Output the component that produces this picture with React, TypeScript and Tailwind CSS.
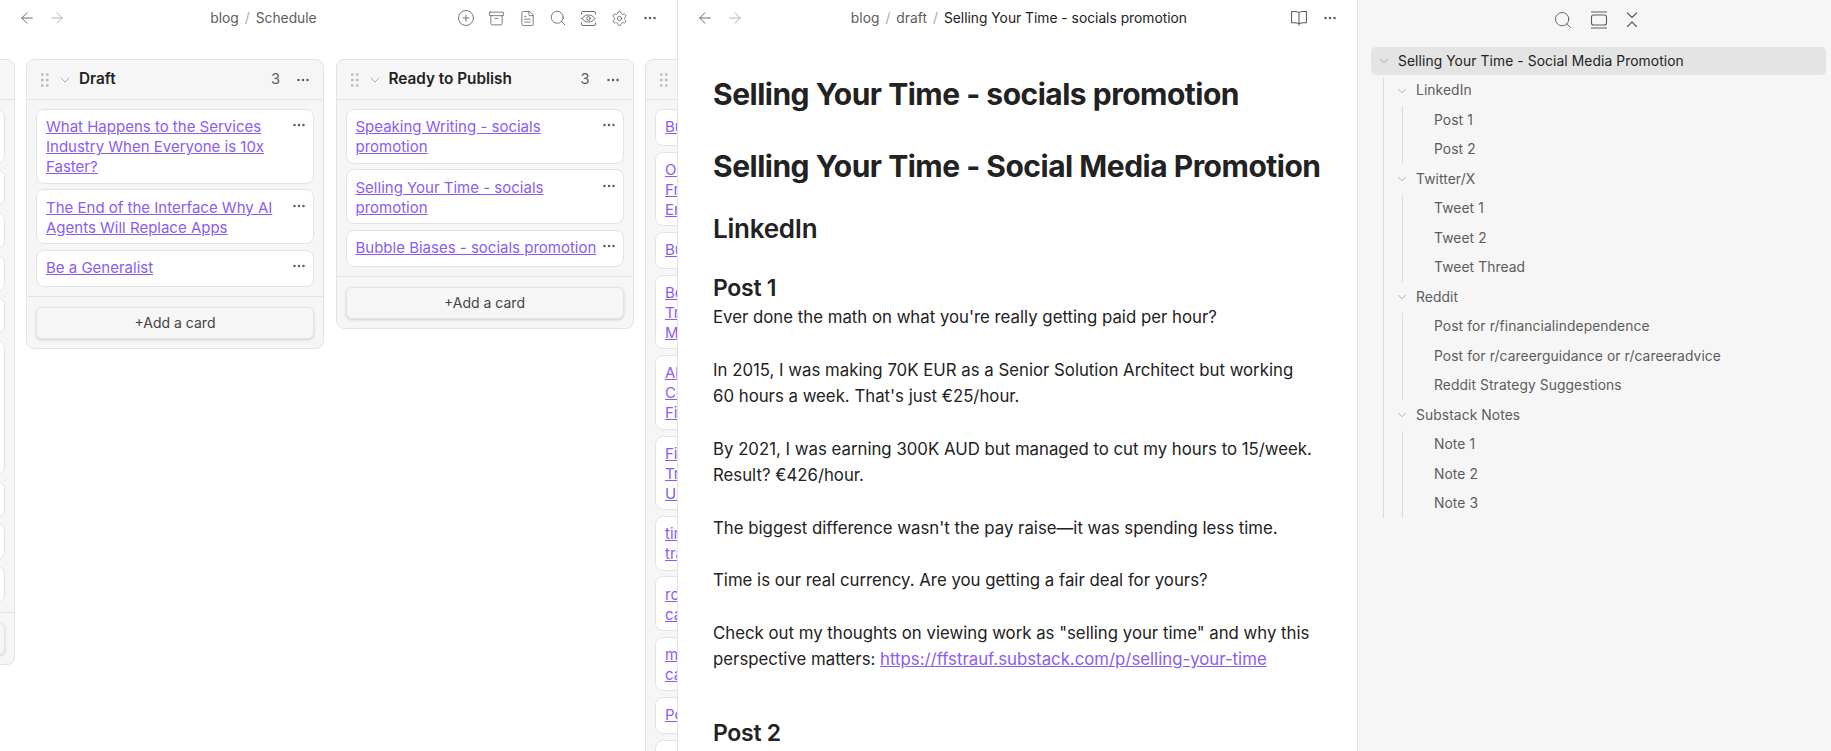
import React from "react";
import { ArrowLeft, ArrowRight, Archive, ChevronDown, CirclePlus, FileText, Search, Settings } from "lucide-react";

const Dots = ({ className = "" }: { className?: string }) => (
  <svg width="14" height="14" viewBox="0 0 14 14" className={className} fill="currentColor">
    <circle cx="2.5" cy="7" r="1.25" />
    <circle cx="7" cy="7" r="1.25" />
    <circle cx="11.5" cy="7" r="1.25" />
  </svg>
);

const Grip = () => (
  <svg width="8" height="14" viewBox="0 0 8 14" fill="#bdbdbd">
    {[1.5, 7, 12.5].map((y) => (
      <React.Fragment key={y}>
        <rect x="0" y={y - 1.25} width="2.5" height="2.5" rx="0.5" />
        <rect x="5" y={y - 1.25} width="2.5" height="2.5" rx="0.5" />
      </React.Fragment>
    ))}
  </svg>
);

const EyeFrame = () => (
  <svg width="17" height="17" viewBox="0 0 17 17" fill="none" stroke="currentColor" strokeWidth="0.9" strokeLinecap="round" strokeLinejoin="round">
    <path d="M1.5 4V3a1.5 1.5 0 0 1 1.5-1.5h11A1.5 1.5 0 0 1 15.5 3v1" />
    <path d="M1.5 13v1A1.5 1.5 0 0 0 3 15.5h11a1.5 1.5 0 0 0 1.5-1.5v-1" />
    <path d="M2 8.5C3.6 6.200 6 5 8.500 5s4.900 1.200 6.500 3.500c-1.600 2.300-4 3.500-6.500 3.500S3.600 10.800 2 8.500Z" />
    <circle cx="8.500" cy="8.500" r="1.800" />
  </svg>
);

const Book = () => (
  <svg width="18" height="18" viewBox="0 0 17 17" fill="none" stroke="currentColor" strokeWidth="1" strokeLinejoin="round">
    <path d="M8.500 3.200C7 2.500 4 2.300 1.500 2.500v10.500c2.500-.2 5.500 0 7 .7 1.500-.7 4.500-.9 7-.7V2.500c-2.500-.2-5.500 0-7 .7Z" />
    <path d="M8.500 3.200v12.300" />
  </svg>
);

const FrameIcon = () => (
  <svg width="18" height="18" viewBox="0 0 18 18" fill="none" stroke="currentColor" strokeWidth="1.1">
    <path d="M1 1h16M1 17h16" />
    <rect x="1.500" y="4" width="15" height="10" rx="2" />
  </svg>
);

const CollapseIcon = () => (
  <svg width="14" height="18" viewBox="0 0 14 18" fill="none" stroke="currentColor" strokeWidth="1.1" strokeLinecap="round" strokeLinejoin="round">
    <path d="M2.500 2l4.500 4.500L11.500 2M2.500 15.500L7 11l4.500 4.500" />
  </svg>
);

type Column = { title?: string; count?: number; cards: string[]; first?: boolean };

const columns: Column[] = [
  {
    first: true,
    cards: [
      "Work Less, Earn More -\nsocials promotion",
      "The Freelance Trap",
      "Remote Work Lessons",
      "Pricing Your Expertise",
      "Consulting Notes",
      "Why Most Productivity\nAdvice Fails People Who\nActually Need It, and\nWhat to Do Instead of\nFollowing the Next\nBig Morning Routine",
      "Leaving Corporate",
      "On Saying No",
      "Small Bets",
    ],
  },
  {
    title: "Draft",
    count: 3,
    cards: [
      "What Happens to the Services Industry When Everyone is 10x Faster?",
      "The End of the Interface Why AI Agents Will Replace Apps",
      "Be a Generalist",
    ],
  },
  {
    title: "Ready to Publish",
    count: 3,
    cards: ["Speaking Writing - socials promotion", "Selling Your Time - socials promotion", "Bubble Biases - socials promotion"],
  },
  {
    title: "Ideas",
    cards: [
      "Bubble Biases",
      "On Leaving Work\nFrom a Decade of\nEngineering",
      "Burnout",
      "Being Early\nTraining Your\nMind",
      "Al Coding\nCopilots and\nFinance",
      "Finding a\nTrade Worth\nUsing",
      "time\ntracking",
      "road\ncases",
      "money\ncalls",
      "Podcasts",
      "Notes",
    ],
  },
];

const Card = ({ text }: { text: string }) => (
  <div className="flex min-h-[37px] items-start rounded-lg border border-[#e3e3e3] bg-white pb-[5.35px] pl-[9px] pt-[7.35px]">
    <a className="w-[245px] shrink-0 whitespace-pre-line text-[15px] leading-5 text-[#8a5cf5] underline">{text}</a>
    <Dots className="ml-[1px] mt-[1px] shrink-0 text-[#5c5c5c]" />
  </div>
);

const BoardColumn = ({ column }: { column: Column }) => (
  <section className={`w-[298px] shrink-0 overflow-hidden rounded-lg border border-[#e3e3e3] bg-[#f6f6f6] ${column.first ? "-ml-[283.5px]" : ""}`}>
    <header className="flex h-[40px] items-center border-b border-[#e3e3e3] pl-[14px] pr-[13px]">
      <Grip />
      <ChevronDown size={16} strokeWidth={1.1} className="ml-[8px] text-[#8e8e8e]" />
      <h3 className="ml-[6px] flex-1 text-[15.3px] font-semibold text-[#222222]">{column.title}</h3>
      <span className="mr-[16px] text-[14.6px] text-[#5c5c5c]">{column.count}</span>
      <Dots className="text-[#5c5c5c]" />
    </header>
    <div className="flex flex-col gap-[5.7px] p-[9px]">
      {column.cards.map((c) => (
        <Card key={c} text={c} />
      ))}
    </div>
    <footer className="border-t border-[#e3e3e3] px-[9px] pb-[9px] pt-[10px]">
      <button className="flex h-[32px] w-full items-center justify-center rounded-md border border-[#e3e3e3] bg-[#f6f6f6] text-[14px] text-[#444444] shadow-[0_1px_3px_rgba(0,0,0,0.16)]">
        +Add a card
      </button>
    </footer>
  </section>
);

const Crumbs = ({ parts }: { parts: string[] }) => (
  <div className="flex flex-1 items-center justify-center gap-[6px] pl-[10px] text-[13.8px] text-[#5c5c5c]">
    {parts.map((p, i) => (
      <React.Fragment key={p}>
        {i > 0 && <span className="text-[#ababab]">/</span>}
        <span className={i === 2 ? "text-[#222222]" : ""}>{p}</span>
      </React.Fragment>
    ))}
  </div>
);

const Nav = () => (
  <div className="flex gap-[12px] pl-[18px]">
    <ArrowLeft size={18} strokeWidth={1.2} className="text-[#5c5c5c]" />
    <ArrowRight size={18} strokeWidth={1.2} className="text-[#ababab]" />
  </div>
);

const Btn = ({ children }: { children: React.ReactNode }) => (
  <span className="flex w-[30.6px] items-center justify-center text-[#5c5c5c]">{children}</span>
);

const Row = ({ label, chevron }: { label: string; chevron?: boolean }) => (
  <div className="flex h-[28px] items-center text-[13.8px] tracking-[0.1px] text-[#5c5c5c]">
    {chevron && <ChevronDown size={14} strokeWidth={1.3} className="mr-[7px] shrink-0 text-[#9a9a9a]" />}
    {label}
  </div>
);

const tree: { title: string; items: string[] }[] = [
  { title: "LinkedIn", items: ["Post 1", "Post 2"] },
  { title: "Twitter/X", items: ["Tweet 1", "Tweet 2", "Tweet Thread"] },
  { title: "Reddit", items: ["Post for r/financialindependence", "Post for r/careerguidance or r/careeradvice", "Reddit Strategy Suggestions"] },
  { title: "Substack Notes", items: ["Note 1", "Note 2", "Note 3"] },
];

export default function App() {
  return (
    <div className="flex h-screen w-[1831px] overflow-hidden bg-white font-['Inter',sans-serif] text-[#222222]">
      {/* kanban pane */}
      <main className="flex w-[678px] shrink-0 flex-col overflow-hidden border-r border-[#e3e3e3]">
        <div className="flex h-[36px] shrink-0 items-center pr-[12px]">
          <Nav />
          <Crumbs parts={["blog", "Schedule"]} />
          <div className="flex">
            <Btn><CirclePlus size={18} strokeWidth={1.1} /></Btn>
            <Btn><Archive size={17} strokeWidth={1.1} /></Btn>
            <Btn><FileText size={17} strokeWidth={1.1} /></Btn>
            <Btn><Search size={18} strokeWidth={1.1} /></Btn>
            <Btn><EyeFrame /></Btn>
            <Btn><Settings size={17} strokeWidth={1.1} /></Btn>
            <Btn><Dots /></Btn>
          </div>
        </div>
        <div className="flex items-start gap-[11.5px] pt-[23px]">
          {columns.map((c, i) => (
            <BoardColumn key={i} column={c} />
          ))}
        </div>
      </main>

      {/* note pane */}
      <article className="flex w-[680px] shrink-0 flex-col overflow-hidden border-r border-[#e3e3e3]">
        <div className="flex h-[36px] shrink-0 items-center pr-[12px]">
          <Nav />
          <Crumbs parts={["blog", "draft", "Selling Your Time - socials promotion"]} />
          <div className="flex">
            <Btn><Book /></Btn>
            <Btn><Dots /></Btn>
          </div>
        </div>
        <div className="pl-[35px] pr-[20px]">
          <h1 className="mt-[38px] text-[30px] font-bold leading-[40px] tracking-[-0.5px]">Selling Your Time - socials promotion</h1>
          <h1 className="mt-[32px] text-[30px] font-bold leading-[40px] tracking-[-0.5px]">Selling Your Time - Social Media Promotion</h1>
          <h2 className="mt-[25px] text-[26px] font-semibold leading-[36px] tracking-[-0.25px]">LinkedIn</h2>
          <h3 className="mt-[26px] text-[23px] font-semibold leading-[31px] tracking-[-0.3px]">Post 1</h3>
          <div className="max-w-[600px] whitespace-pre-line text-[16.8px] leading-[26.35px]">
            {"Ever done the math on what you're really getting paid per hour?\n\nIn 2015, I was making 70K EUR as a Senior Solution Architect but working 60 hours a week. That's just €25/hour.\n\nBy 2021, I was earning 300K AUD but managed to cut my hours to 15/week. Result? €426/hour.\n\nThe biggest difference wasn't the pay raise—it was spending less time.\n\nTime is our real currency. Are you getting a fair deal for yours?\n\nCheck out my thoughts on viewing work as \"selling your time\" and why this perspective matters: "}
            <a className="text-[#8a5cf5] underline">https://ffstrauf.substack.com/p/selling-your-time</a>
          </div>
          <h3 className="mt-[45px] text-[23px] font-semibold leading-[30px] tracking-[-0.3px]">Post 2</h3>
        </div>
      </article>

      {/* outline */}
      <aside className="flex-1 bg-[#f6f6f6]">
        <div className="flex h-[47px] items-center justify-center gap-[17px] pb-[7px] pl-[2px] text-[#5c5c5c]">
          <Search size={20} strokeWidth={1.1} />
          <FrameIcon />
          <CollapseIcon />
        </div>
        <div className="pl-[13px] pr-[5px]">
          <div className="flex h-[28px] items-center rounded-[5px] bg-[#e4e4e4] pl-[6px] text-[13.8px] tracking-[0.1px] text-[#222222]">
            <ChevronDown size={14} strokeWidth={1.3} className="mr-[7px] shrink-0 text-[#8e8e8e]" />
            Selling Your Time - Social Media Promotion
          </div>
          <div className="ml-[12px] mt-[1.5px] flex flex-col gap-[1.5px] border-l border-[#dcdcdc] pl-[11px]">
            {tree.map((s) => (
              <div key={s.title} className="flex flex-col gap-[1.5px]">
                <Row label={s.title} chevron />
                <div className="ml-[7px] flex flex-col gap-[1.5px] border-l border-[#dcdcdc] pl-[31px]">
                  {s.items.map((it) => (
                    <Row key={it} label={it} />
                  ))}
                </div>
              </div>
            ))}
          </div>
        </div>
      </aside>
    </div>
  );
}
